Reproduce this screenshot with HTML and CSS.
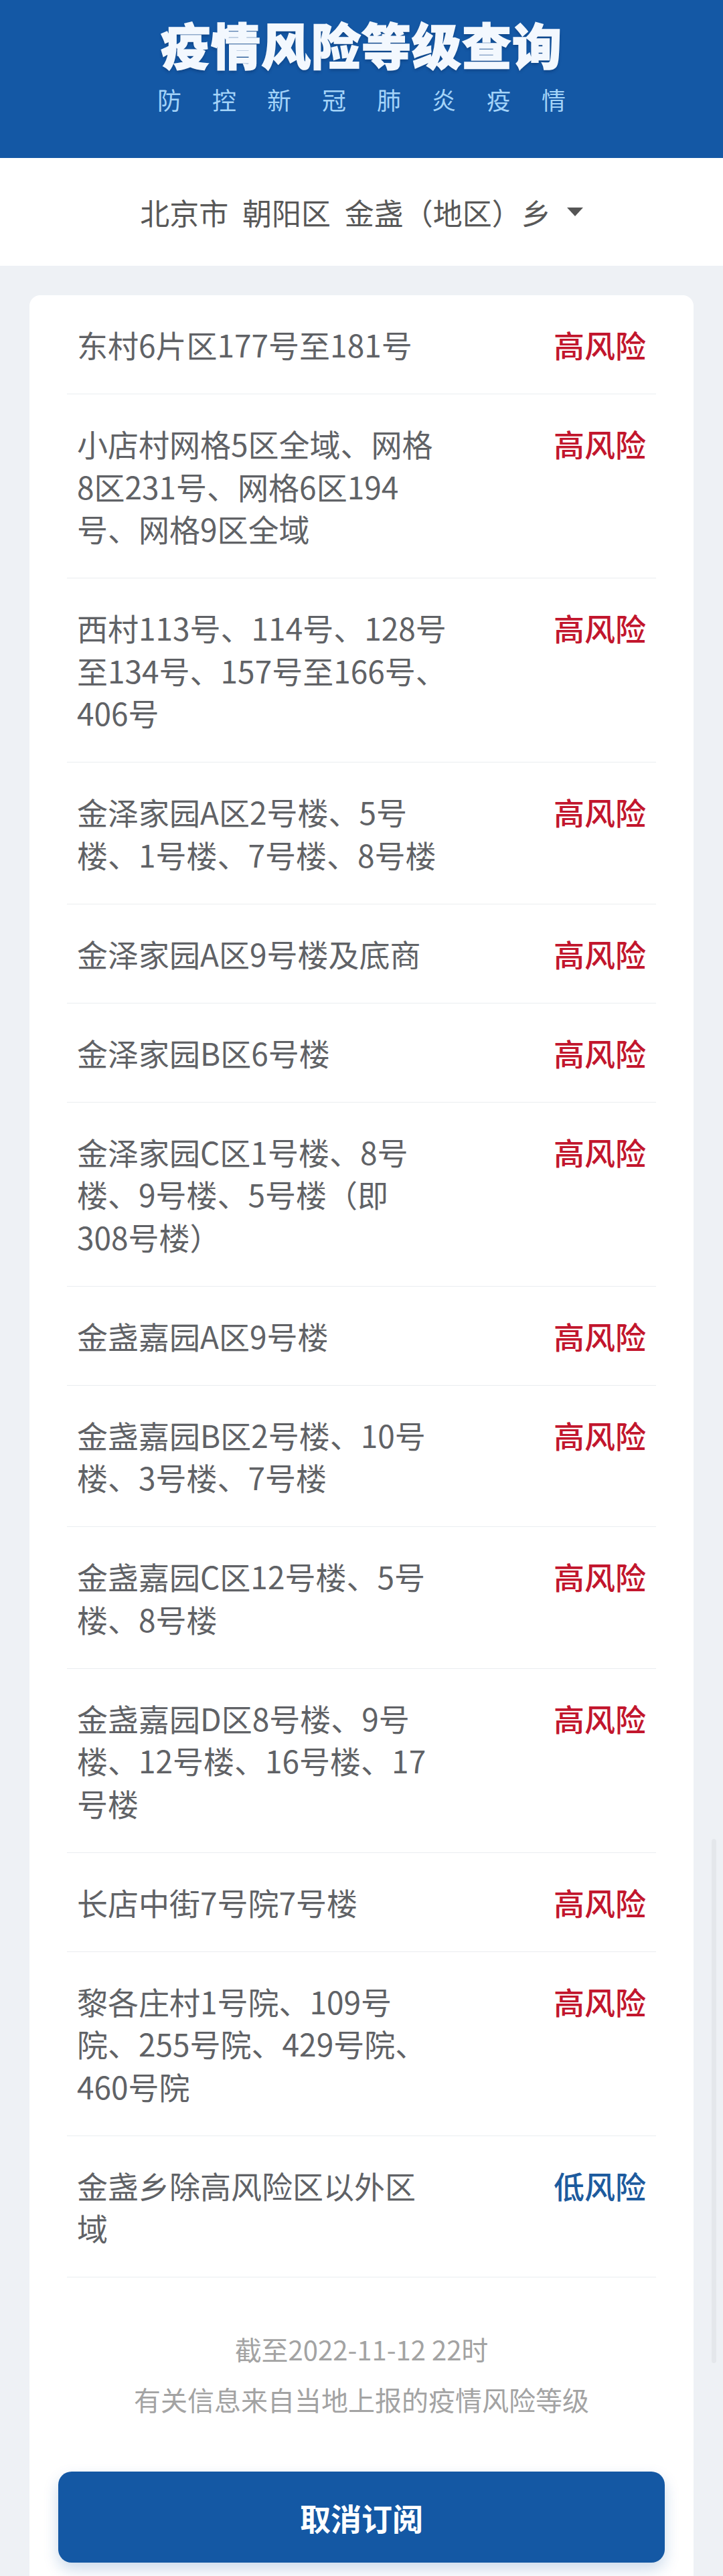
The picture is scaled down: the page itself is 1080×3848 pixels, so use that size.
FILE: index.html
```
<!DOCTYPE html>
<html lang="zh-CN">
<head>
    <meta charset="UTF-8">
    <meta name="viewport" content="width=device-width, initial-scale=1.0">
    <title>疫情风险等级查询</title>
    <link rel="stylesheet" href="styles.css">
</head>
<body>

<header class="banner">
    <h1 class="banner-title">疫情风险等级查询</h1>
    <p class="banner-sub">防控新冠肺炎疫情</p>
</header>

<div class="area-picker">
    <span id="area-name">北京市 朝阳区 金盏（地区）乡</span>
    <span class="caret"></span>
</div>

<div class="card">
    <ul class="risk-list" id="risk-list"></ul>

    <div class="note">
        <p>截至2022-11-12 22时</p>
        <p>有关信息来自当地上报的疫情风险等级</p>
    </div>

    <a href="#" class="unsub-btn">取消订阅</a>
</div>

<div class="scroll-thumb"></div>

<script>
    // lines are kept as the app wraps them
    const areas = [
        {lines: ['东村6片区177号至181号'], level: 'high'},
        {lines: ['小店村网格5区全域、网格', '8区231号、网格6区194', '号、网格9区全域'], level: 'high'},
        {lines: ['西村113号、114号、128号', '至134号、157号至166号、', '406号'], level: 'high'},
        {lines: ['金泽家园A区2号楼、5号', '楼、1号楼、7号楼、8号楼'], level: 'high'},
        {lines: ['金泽家园A区9号楼及底商'], level: 'high'},
        {lines: ['金泽家园B区6号楼'], level: 'high'},
        {lines: ['金泽家园C区1号楼、8号', '楼、9号楼、5号楼（即', '308号楼）'], level: 'high'},
        {lines: ['金盏嘉园A区9号楼'], level: 'high'},
        {lines: ['金盏嘉园B区2号楼、10号', '楼、3号楼、7号楼'], level: 'high'},
        {lines: ['金盏嘉园C区12号楼、5号', '楼、8号楼'], level: 'high'},
        {lines: ['金盏嘉园D区8号楼、9号', '楼、12号楼、16号楼、17', '号楼'], level: 'high'},
        {lines: ['长店中街7号院7号楼'], level: 'high'},
        {lines: ['黎各庄村1号院、109号', '院、255号院、429号院、', '460号院'], level: 'high'},
        {lines: ['金盏乡除高风险区以外区', '域'], level: 'low'}
    ];

    const labels = {high: '高风险', low: '低风险'};

    function renderList() {
        const list = document.getElementById('risk-list');
        list.innerHTML = '';

        areas.forEach(area => {
            const row = document.createElement('li');
            row.className = 'risk-row';
            row.innerHTML = `
                <span class="place">${area.lines.join('<br>')}</span>
                <span class="level ${area.level}">${labels[area.level]}</span>
            `;
            list.appendChild(row);
        });
    }

    renderList();
</script>

</body>
</html>
```

FILE: styles.css
```
body {
    font-family: "Noto Sans CJK SC", "Noto Sans", sans-serif;
    margin: 0;
    padding: 0;
    background-color: #eef1f5;
}

.banner {
    height: 236px;
    box-sizing: border-box;
    padding-top: 20px;
    background-color: #1458a5;
    text-align: center;
}

.banner-title {
    margin: 0;
    font-size: 74px;
    font-weight: 900;
    line-height: 90px;
    letter-spacing: 1px;
    color: #f3f8fe;
    -webkit-text-stroke: 1.5px #f3f8fe;
    text-shadow: 0 3px 4px rgba(0, 25, 70, 0.35);
}

.banner-sub {
    margin: 16px 0 0;
    padding-left: 46px;
    font-size: 36px;
    line-height: 44px;
    letter-spacing: 46px;
    color: #a3d3f8;
}

.area-picker {
    height: 161px;
    display: flex;
    align-items: center;
    justify-content: center;
    background-color: #fff;
    font-size: 44px;
    color: #585858;
    word-spacing: 11px;
}

.caret {
    width: 0;
    height: 0;
    margin-left: 24px;
    border-left: 12px solid transparent;
    border-right: 12px solid transparent;
    border-top: 13px solid #555;
}

.card {
    margin: 44px 44px 0;
    padding-bottom: 20px;
    background-color: #fff;
    border-radius: 16px 16px 0 0;
}

.risk-list {
    list-style-type: none;
    margin: 0;
    padding: 0 56px;
}

.risk-row {
    display: flex;
    justify-content: space-between;
    align-items: flex-start;
    padding: 42px 15px 41.5px;
    border-bottom: 1px solid #eaedf0;
    font-size: 46px;
    line-height: 63.5px;
}

.place {
    color: #606266;
    white-space: nowrap;
}

.level {
    flex-shrink: 0;
    font-weight: 500;
}

.level.high {
    color: #c2162d;
}

.level.low {
    color: #1d5b9e;
}

.note {
    margin-top: 70px;
    text-align: center;
    font-size: 40px;
    line-height: 75px;
    color: #a3a3a3;
}

.note p {
    margin: 0;
}

.unsub-btn {
    display: flex;
    align-items: center;
    justify-content: center;
    height: 136px;
    margin: 70px 43px 0;
    background-color: #1458a4;
    color: white;
    font-size: 46px;
    font-weight: bold;
    text-decoration: none;
    border-radius: 20px;
    box-shadow: 0 10px 22px rgba(20, 88, 164, 0.22);
}

.scroll-thumb {
    position: absolute;
    top: 2747px;
    right: 10px;
    width: 7px;
    height: 783px;
    border-radius: 4px;
    background-color: rgba(0, 0, 0, 0.04);
}
```
